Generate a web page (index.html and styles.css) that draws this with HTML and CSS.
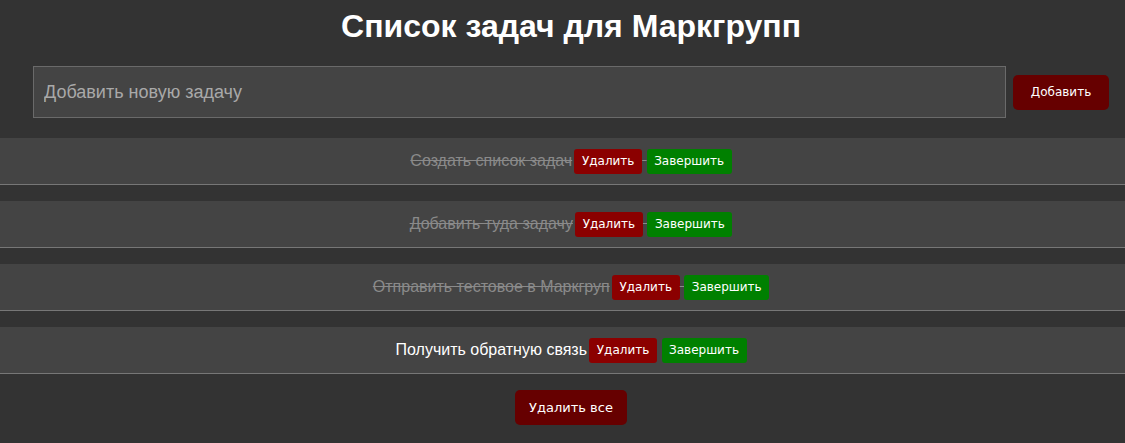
FILE: index.html
```html
<!DOCTYPE html>
<html lang="ru">
<head>
<meta charset="utf-8">
<title>Список задач</title>
<link rel="stylesheet" href="styles.css">
</head>
<body>
<h1 class="title">Список задач для Маркгрупп</h1>
<div class="add-form">
  <input class="add-input" type="text" placeholder="Добавить новую задачу">
  <button class="add-btn">Добавить</button>
</div>
<ul class="task-list">
  <li class="task"><span class="task-text done">Создать список задач<button class="btn btn-del">Удалить</button> <button class="btn btn-done">Завершить</button></span></li>
  <li class="task"><span class="task-text done">Добавить туда задачу<button class="btn btn-del">Удалить</button> <button class="btn btn-done">Завершить</button></span></li>
  <li class="task"><span class="task-text done">Отправить тестовое в Маркгруп<button class="btn btn-del">Удалить</button> <button class="btn btn-done">Завершить</button></span></li>
  <li class="task"><span class="task-text">Получить обратную связь<button class="btn btn-del">Удалить</button> <button class="btn btn-done">Завершить</button></span></li>
</ul>
<div class="footer">
  <button class="clear-btn">Удалить все</button>
</div>
</body>
</html>
```
FILE: styles.css
```css
html, body {
  margin: 0;
  padding: 0;
  background: #333333;
  font-family: "Liberation Sans", Arial, sans-serif;
}
.title {
  margin: 0;
  padding: 6px 0 0 17px;
  line-height: 40px;
  font-size: 32px;
  font-weight: bold;
  color: #ffffff;
  text-align: center;
}
.add-form {
  display: flex;
  align-items: center;
  padding: 20px 16px 0 33px;
  gap: 7px;
}
.add-input {
  flex: 1;
  height: 52px;
  box-sizing: border-box;
  background: #444444;
  border: 1px solid #6a6a6a;
  color: #dddddd;
  font-family: "Liberation Sans", Arial, sans-serif;
  font-size: 18px;
  padding: 0 10px;
  outline: none;
}
.add-input::placeholder {
  color: #a9a9a9;
}
.add-btn {
  width: 96px;
  height: 35px;
  border: none;
  border-radius: 5px;
  background: #660000;
  color: #ffffff;
  font-family: "DejaVu Sans", Verdana, sans-serif;
  font-size: 12px;
  padding: 0;
}
.task-list {
  list-style: none;
  margin: 20px 0 0 0;
  padding: 0;
}
.task {
  height: 46px;
  background: #444444;
  border-bottom: 1px solid #777777;
  margin-bottom: 16px;
  padding-left: 17px;
  display: flex;
  align-items: center;
  justify-content: center;
}
.task-text {
  color: #ffffff;
  font-size: 16px;
}
.task-text.done {
  color: #8a8a8a;
  text-decoration: line-through;
}
.btn {
  height: 25px;
  border: none;
  border-radius: 3px;
  color: #ffffff;
  font-family: "DejaVu Sans", Verdana, sans-serif;
  font-size: 12px;
  padding: 0;
  margin-left: 2px;
  vertical-align: middle;
}
.btn-del {
  width: 68px;
  background: #8b0000;
}
.btn-done {
  width: 85px;
  background: #008000;
  margin-left: 0;
}
.footer {
  display: flex;
  justify-content: center;
  padding-left: 17px;
}
.clear-btn {
  width: 112px;
  height: 35px;
  border: none;
  border-radius: 5px;
  background: #660000;
  color: #ffffff;
  font-family: "DejaVu Sans", Verdana, sans-serif;
  font-size: 13px;
  padding: 0;
}
```
